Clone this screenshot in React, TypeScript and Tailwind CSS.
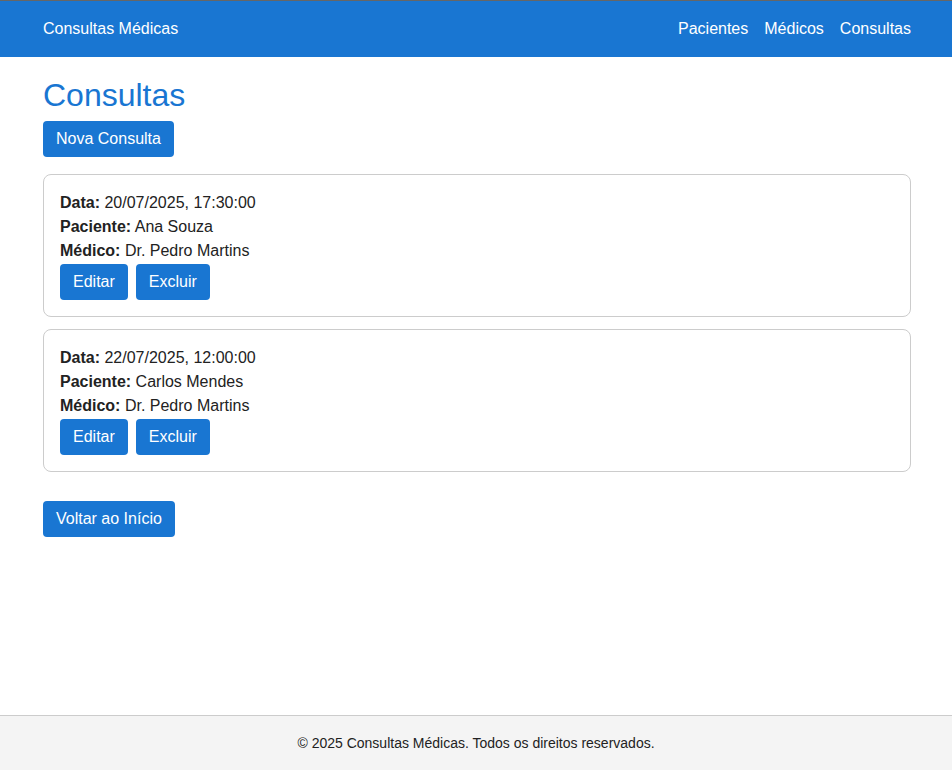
type Consulta = {
  data: string;
  paciente: string;
  medico: string;
};

const consultas: Consulta[] = [
  { data: "20/07/2025, 17:30:00", paciente: "Ana Souza", medico: "Dr. Pedro Martins" },
  { data: "22/07/2025, 12:00:00", paciente: "Carlos Mendes", medico: "Dr. Pedro Martins" },
];

function Botao({ children }: { children: React.ReactNode }) {
  return (
    <button className="rounded-[4px] bg-[#1976d2] px-[13px] py-[9px] text-[16px] leading-[18px] text-white">
      {children}
    </button>
  );
}

export default function App() {
  return (
    <div className="flex min-h-[770px] flex-col bg-white font-['Liberation_Sans',Arial,sans-serif] text-[#222]">
      {/* cabeçalho */}
      <header className="flex h-[57px] items-center justify-between border-t border-[#666] bg-[#1976d2] pb-[1px] pl-[43px] pr-[41px] text-white">
        <span className="text-[16px]">Consultas Médicas</span>
        <nav className="flex gap-4 text-[16px]">
          <a href="#">Pacientes</a>
          <a href="#">Médicos</a>
          <a href="#">Consultas</a>
        </nav>
      </header>

      {/* conteúdo */}
      <main className="flex-1 pl-[43px] pr-[41px] pt-5">
        <h1 className="mb-[7px] text-[32px] leading-[37px] text-[#1976d2]">Consultas</h1>
        <Botao>Nova Consulta</Botao>

        <ul className="mt-[17px] flex flex-col gap-3">
          {consultas.map((c, i) => (
            <li key={i} className="rounded-lg border border-[#ccc] p-4 text-[16px] leading-6">
              <p>
                <strong>Data:</strong> {c.data}
              </p>
              <p>
                <strong>Paciente:</strong> {c.paciente}
              </p>
              <p>
                <strong>Médico:</strong> {c.medico}
              </p>
              <div className="mt-[1px] flex gap-2">
                <Botao>Editar</Botao>
                <Botao>Excluir</Botao>
              </div>
            </li>
          ))}
        </ul>

        <div className="mt-[29px]">
          <Botao>Voltar ao Início</Botao>
        </div>
      </main>

      {/* rodapé */}
      <footer className="border-t border-[#ccc] bg-[#f4f4f4] py-[18px] text-center text-[14px] leading-[18px] text-[#222]">
        © 2025 Consultas Médicas. Todos os direitos reservados.
      </footer>
    </div>
  );
}
